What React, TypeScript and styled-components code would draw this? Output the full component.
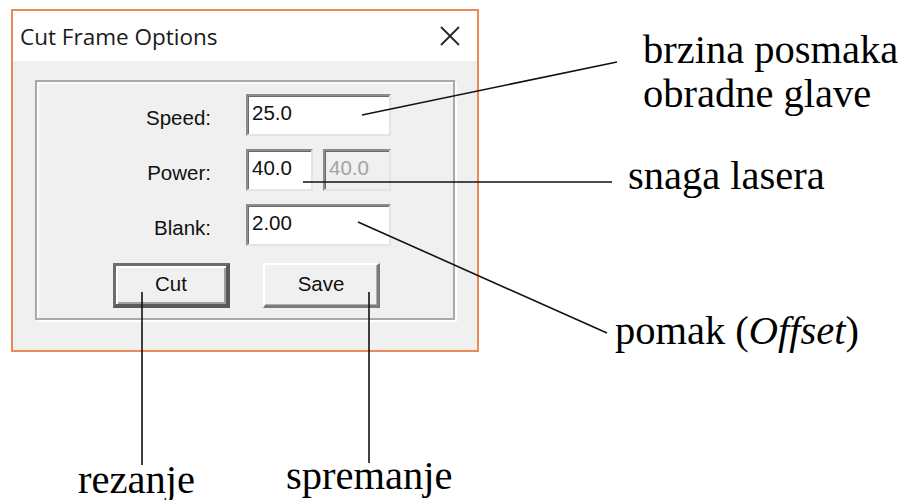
import React from 'react';
import styled, { createGlobalStyle } from 'styled-components';

const GlobalStyle = createGlobalStyle`
  html, body {
    margin: 0;
    padding: 0;
    background: #ffffff;
  }
`;

const Page = styled.div`
  position: relative;
  width: 908px;
  height: 500px;
  overflow: hidden;
  padding: 9px 0 0 11px;
  box-sizing: border-box;
  background: #ffffff;
`;

const Dialog = styled.div`
  width: 468px;
  height: 343px;
  box-sizing: border-box;
  border: 2px solid #ec8a55;
  background: #f0f0f0;
  display: flex;
  flex-direction: column;
`;

const TitleBar = styled.div`
  height: 50px;
  background: #ffffff;
  display: flex;
  align-items: center;
  justify-content: space-between;
  padding: 0 16px 0 7px;
  font-family: "Open Sans", "Noto Sans", sans-serif;
  font-size: 22.5px;
  color: #1a1a1a;
`;

const CloseIcon = () => (
  <svg width="22" height="22" viewBox="0 0 22 22">
    <path d="M2 2 L20 20 M20 2 L2 20" stroke="#262626" strokeWidth="1.8" fill="none" />
  </svg>
);

const Body = styled.div`
  flex: 1;
  padding: 19px 22px 30px 22px;
  display: flex;
`;

const GroupBox = styled.div`
  flex: 1;
  border: 2px solid #a9a9a9;
  box-shadow: 2px 2px 0 #ffffff, inset 2px 2px 0 #ffffff;
  padding: 12px 0 0 0;
  display: flex;
  flex-direction: column;
  font-family: "Liberation Sans", Arial, sans-serif;
  font-size: 20.5px;
  color: #111;
`;

const Form = styled.div`
  display: grid;
  grid-template-columns: 174px 145px;
  column-gap: 35px;
  row-gap: 13px;
  align-items: center;
`;

const Label = styled.div`
  text-align: right;
  padding-top: 5px;
`;

const Pair = styled.div`
  display: flex;
  gap: 10px;
`;

const Field = styled.div<{ $width?: number; $disabled?: boolean }>`
  width: ${({ $width }) => ($width ? `${$width}px` : '100%')};
  height: 42px;
  box-sizing: border-box;
  border-style: solid;
  border-width: 2px;
  border-color: #8c8c8c #e4e4e4 #e4e4e4 #8c8c8c;
  box-shadow: inset 1px 1px 0 #6a6a6a;
  background: ${({ $disabled }) => ($disabled ? '#f0f0f0' : '#ffffff')};
  color: ${({ $disabled }) => ($disabled ? '#a3a3a3' : '#111')};
  padding: 2px 0 0 4px;
  line-height: 30px;
`;

const ButtonRow = styled.div`
  display: flex;
  gap: 33px;
  padding-left: 76px;
  margin-top: 17px;
`;

const Button = styled.div<{ $default?: boolean }>`
  width: 117px;
  height: 45px;
  box-sizing: border-box;
  display: flex;
  align-items: center;
  justify-content: center;
  background: #f0f0f0;
  border-style: solid;
  border-width: ${({ $default }) => ($default ? '3px 4px 4px 3px' : '2px 3px 3px 2px')};
  border-color: ${({ $default }) =>
    $default ? '#6e6e6e #5a5a5a #5a5a5a #6e6e6e' : '#ffffff #7a7a7a #7a7a7a #ffffff'};
  box-shadow: ${({ $default }) =>
    $default ? 'inset 2px 2px 0 #ffffff, inset -2px -2px 0 #a0a0a0' : 'inset -1px -1px 0 #b0b0b0'};
  padding-bottom: 2px;
`;

const Callout = styled.div<{ $x: number; $y: number }>`
  position: absolute;
  left: ${({ $x }) => $x}px;
  top: ${({ $y }) => $y}px;
  font-family: "Liberation Serif", "Times New Roman", serif;
  font-size: 40.5px;
  line-height: 44px;
  color: #000;
  white-space: nowrap;
`;

const Leaders = styled.svg`
  position: absolute;
  left: 0;
  top: 0;
  pointer-events: none;
`;

export default function App() {
  return (
    <>
      <GlobalStyle />
      <Page>
        <Dialog>
          <TitleBar>
            <span>Cut Frame Options</span>
            <CloseIcon />
          </TitleBar>
          <Body>
            <GroupBox>
              <Form>
                <Label>Speed:</Label>
                <Field>25.0</Field>
                <Label>Power:</Label>
                <Pair>
                  <Field $width={67}>40.0</Field>
                  <Field $width={68} $disabled>40.0</Field>
                </Pair>
                <Label>Blank:</Label>
                <Field>2.00</Field>
              </Form>
              <ButtonRow>
                <Button $default>Cut</Button>
                <Button>Save</Button>
              </ButtonRow>
            </GroupBox>
          </Body>
        </Dialog>

        <Leaders width="908" height="500">
          <g stroke="#111" strokeWidth="1.6" fill="none">
            <line x1="362" y1="115" x2="617" y2="62" />
            <line x1="303" y1="182" x2="612" y2="182" />
            <line x1="358" y1="222" x2="607" y2="333" />
            <line x1="142" y1="292" x2="142" y2="465" />
            <line x1="369" y1="292" x2="369" y2="463" />
          </g>
        </Leaders>

        <Callout $x={643} $y={28}>
          brzina posmaka
          <br />
          obradne glave
        </Callout>
        <Callout $x={628} $y={154}>snaga lasera</Callout>
        <Callout $x={615} $y={309}>
          pomak (<i>Offset</i>)
        </Callout>
        <Callout $x={78} $y={458}>rezanje</Callout>
        <Callout $x={286} $y={454}>spremanje</Callout>
      </Page>
    </>
  );
}
